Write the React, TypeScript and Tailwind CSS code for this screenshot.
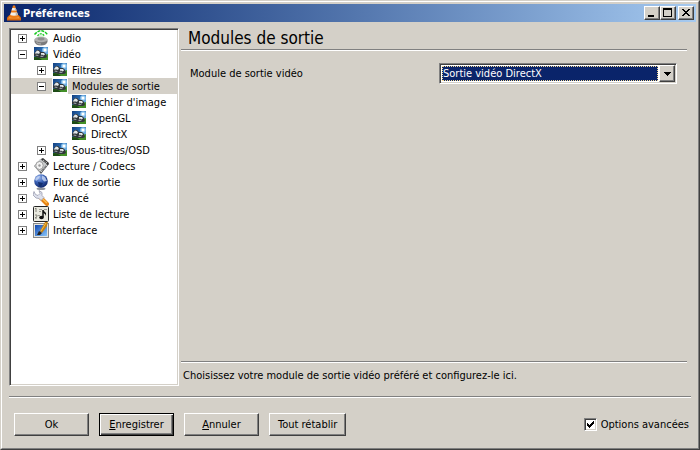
import { useState, type ReactNode } from "react";
import clsx from "clsx";

type IconName = "audio" | "video" | "codecs" | "stream" | "advanced" | "playlist" | "interface";

interface TreeItem {
  label: string;
  icon: IconName;
  level: 0 | 1 | 2;
  state?: "open" | "closed";
}

const items: TreeItem[] = [
  { label: "Audio", icon: "audio", level: 0, state: "closed" },
  { label: "Vidéo", icon: "video", level: 0, state: "open" },
  { label: "Filtres", icon: "video", level: 1, state: "closed" },
  { label: "Modules de sortie", icon: "video", level: 1, state: "open" },
  { label: "Fichier d'image", icon: "video", level: 2 },
  { label: "OpenGL", icon: "video", level: 2 },
  { label: "DirectX", icon: "video", level: 2 },
  { label: "Sous-titres/OSD", icon: "video", level: 1, state: "closed" },
  { label: "Lecture / Codecs", icon: "codecs", level: 0, state: "closed" },
  { label: "Flux de sortie", icon: "stream", level: 0, state: "closed" },
  { label: "Avancé", icon: "advanced", level: 0, state: "closed" },
  { label: "Liste de lecture", icon: "playlist", level: 0, state: "closed" },
  { label: "Interface", icon: "interface", level: 0, state: "closed" },
];

const indents = ["pl-[7px]", "pl-[26px]", "pl-[45px]"];

const raised =
  "border border-t-white border-l-white border-r-[#404040] border-b-[#404040] bg-[#d4d0c8] shadow-[inset_-1px_-1px_0_#808080]";
const sunken =
  "border border-t-[#808080] border-l-[#808080] border-r-white border-b-white bg-white shadow-[inset_1px_1px_0_#404040,inset_-1px_-1px_0_#d4d0c8]";

const drawings: Record<IconName, ReactNode> = {
  audio: (
    <>
      <path d="M4.500 5.500Q8 1 11.500 5.500L10 9H6z" fill="#d9f7d9" />
      <path d="M1.500 4.500Q8-3 14.500 4.500" fill="none" stroke="#14c81c" strokeWidth="1.400" strokeDasharray="3 1" />
      <path d="M4.500 6Q8 1.500 11.500 6" fill="none" stroke="#14c81c" strokeWidth="1.200" strokeDasharray="2 1" />
      <path d="M1.500 9.500v2.500c1 2.500 3 3.500 6.500 3.500s5.500-1 6.500-3.500V9.500z" fill="#7c7c7c" />
      <ellipse cx="8" cy="9.500" rx="6.500" ry="2.800" fill="#b0b0b0" />
      <ellipse cx="8" cy="9" rx="3.500" ry="1.400" fill="#8e8e8e" />
      <path d="M3.500 12.500Q5 14 8 14" fill="none" stroke="#b8b8b8" />
    </>
  ),
  video: (
    <>
      <defs>
        <linearGradient id="sky" x1="0" y1="0" x2="1" y2="0.5">
          <stop offset="0" stopColor="#123f80" />
          <stop offset="0.600" stopColor="#2f72b8" />
          <stop offset="1" stopColor="#6fb0e2" />
        </linearGradient>
      </defs>
      <path d="M1 1h14v13H1z" fill="url(#sky)" />
      <circle cx="12" cy="4" r="2.800" fill="#8fc6ef" />
      <circle cx="12" cy="4" r="1.500" fill="#fff" />
      <path d="M1 11l8-1 6-2v6H1z" fill="#438f28" />
      <path d="M1 11q5 0 8 3H1z" fill="#1d4b17" />
      <path d="M1 8l1-2 2-2h2l2 2h3l2 2 1 3-2 1H6l-5-2z" fill="#30363a" />
      <path d="M2 7l2-2.500L6 5l1 2-2 1-1-1-1 1zM8 7h3l1 1.500-1.500 1L9 8.500l-1 .5z" fill="#e2e7ea" />
      <path d="M2 9l2-.5L6 10H4zM7 10l2-.5 2 1.500H8z" fill="#9aa2a6" />
    </>
  ),
  codecs: (
    <>
      <path d="M1 8l7-7 8 5-8 10z" fill="#56585a" />
      <path d="M1 8l6-7 7 5-7 8z" fill="#c9cccd" />
      <path d="M8 1l2-1 6 5-1 2z" fill="#333" />
      <path d="M10 2l4 3" stroke="#e8e8e8" strokeDasharray="1 1" />
      <ellipse cx="6.500" cy="7.500" rx="3.700" ry="4" fill="#f1f1f1" stroke="#8c8c8c" strokeWidth="0.800" />
      <circle cx="6.500" cy="7.500" r="1.200" fill="#9a9a9a" />
      <path d="M8 14l6-7" stroke="#fff" strokeDasharray="1 1" />
    </>
  ),
  stream: (
    <>
      <defs>
        <radialGradient id="globe" cx="0.35" cy="0.25" r="0.75">
          <stop offset="0" stopColor="#9cb8ee" />
          <stop offset="0.500" stopColor="#3860b4" />
          <stop offset="1" stopColor="#122a70" />
        </radialGradient>
      </defs>
      <ellipse cx="8" cy="14.800" rx="4.500" ry="1.200" fill="#8e939c" />
      <circle cx="8" cy="7" r="6.800" fill="url(#globe)" />
      <path d="M2 5Q4 1.500 7 2L5.500 5 3 7zM9 1.500l3 1.500 2 4-3 .5-2-2.500z" fill="#c9d8f5" fillOpacity="0.800" />
      <path d="M5 8l5 1-2 4-2-1z" fill="#15306f" />
    </>
  ),
  advanced: (
    <>
      <path d="M8 8l6 6" stroke="#e58314" strokeWidth="4" strokeLinecap="round" />
      <path d="M8 7.500l6 5.500" stroke="#ffbf4d" strokeWidth="1.500" />
      <path d="M1 1.500L0 5l3 3 3 .5 2 2 3-3-2-2 0-3-3-2 1 3-2 2-2.500-1z" fill="#dde0ec" stroke="#9a9db0" strokeWidth="0.800" />
    </>
  ),
  playlist: (
    <>
      <rect x="0.500" y="0.500" width="15" height="15" rx="1" fill="#e9e9df" stroke="#242424" />
      <path d="M2 3l1-1v4M2 9h2v1.500L2 12h2" fill="none" stroke="#77776e" strokeWidth="0.900" />
      <path d="M6 3.500h3M6 5.500h2M5 9.500h2M11 3.500h3" stroke="#9b9b92" />
      <path d="M10 4v7" stroke="#111" strokeWidth="1.500" />
      <path d="M10 4l3 3v3l-1-2-2-1z" fill="#111" />
      <ellipse cx="8.500" cy="11.500" rx="2.300" ry="1.700" fill="#111" />
    </>
  ),
  interface: (
    <>
      <defs>
        <linearGradient id="screen" x1="0" y1="0" x2="1" y2="1">
          <stop offset="0" stopColor="#1048b0" />
          <stop offset="1" stopColor="#8ac6fa" />
        </linearGradient>
      </defs>
      <path d="M0 1h16v15H0z" fill="#888" />
      <path d="M1 2h14v13H1z" fill="#e4e4dd" />
      <path d="M2 3h12v11H2z" fill="url(#screen)" />
      <path d="M7 9l5-9 3-1-1 5-5 7z" fill="#c8820d" />
      <path d="M8 9l5-8" stroke="#f0bd50" strokeWidth="1" />
      <path d="M4 13l2-4 3 2-2 2z" fill="#222" />
    </>
  ),
};

function Cone() {
  return (
    <svg viewBox="0 0 16 16" className="h-4 w-4" aria-hidden="true">
      <path d="M1 15.500v-3L3.500 10h9l2.500 2.500v3z" fill="#d9690f" />
      <path d="M2 13.500L4 11h8l2 2.500z" fill="#f69a3a" />
      <path d="M7 .5h2L12.500 12q-4.500 2-9 0z" fill="#ee7c18" />
      <path d="M6.300 3h3.400l.8 2.500h-5zM5 7.500h6.100l.8 2.500q-4 1.500-7.700 0z" fill="#f1efec" />
      <path d="M8.500 3h1.200l.8 2.500H9zM9.500 7.500h1.600l.8 2.500-2 .5z" fill="#b9b6b3" />
    </svg>
  );
}

function TitleButton({ label, className, children }: { label: string; className?: string; children: ReactNode }) {
  return (
    <button type="button" aria-label={label} className={clsx("flex h-[14px] w-4 items-center justify-center", raised, className)}>
      <svg viewBox="0 0 12 10" className="h-[10px] w-3 shrink-0" shapeRendering="crispEdges" aria-hidden="true">
        {children}
      </svg>
    </button>
  );
}

function TreeRow({ item, selected, onSelect }: { item: TreeItem; selected: boolean; onSelect: () => void }) {
  return (
    <li
      role="treeitem"
      aria-selected={selected}
      aria-expanded={item.state ? item.state === "open" : undefined}
      onClick={onSelect}
      className={clsx("flex h-4", indents[item.level], selected && "bg-[#d4d0c8]")}
    >
      <span className="mt-1 mr-[6px] flex h-[9px] w-[9px] shrink-0">
        {item.state && (
          <svg viewBox="0 0 9 9" className="h-[9px] w-[9px]" shapeRendering="crispEdges" aria-hidden="true">
            <path d="M0 0h9v9H0z" fill="#808080" />
            <path d="M1 1h7v7H1z" fill="#fff" />
            <path d={item.state === "open" ? "M2 4h5v1H2z" : "M2 4h5v1H2zM4 2h1v5H4z"} fill="#000" />
          </svg>
        )}
      </span>
      <svg viewBox="0 0 16 16" className="mr-1 h-4 w-4 shrink-0 bg-white" aria-hidden="true">
        {drawings[item.icon]}
      </svg>
      <span className="leading-[18px] whitespace-nowrap">{item.label}</span>
    </li>
  );
}

function DialogButton({ isDefault, children }: { isDefault?: boolean; children: ReactNode }) {
  return (
    <button
      type="button"
      className={clsx(
        "h-[23px] min-w-[75px] px-2 whitespace-nowrap",
        isDefault
          ? "border border-black bg-[#d4d0c8] shadow-[inset_1px_1px_0_#fff,inset_-1px_-1px_0_#404040,inset_-2px_-2px_0_#808080]"
          : raised
      )}
    >
      {children}
    </button>
  );
}

export default function App() {
  const [selected, setSelected] = useState("Modules de sortie");
  const [advanced, setAdvanced] = useState(true);

  return (
    <div className="flex min-h-screen border border-t-[#d4d0c8] border-r-[#404040] border-b-[#404040] border-l-[#d4d0c8] bg-[#d4d0c8] font-['DejaVu_Sans_Condensed','DejaVu_Sans',sans-serif] text-[11px] leading-4 text-black">
      <div className="flex flex-1 flex-col border border-t-white border-r-[#808080] border-b-[#808080] border-l-white p-[2px]">
        <header className="flex h-[18px] items-center bg-linear-to-r from-[#0a246a] to-[#a6caf0] px-[2px] text-white">
          <Cone />
          <h1 className="ml-px flex-1 self-start leading-5 font-bold">Préférences</h1>
          <TitleButton label="Réduire">
            <path d="M2 7h6v2H2z" />
          </TitleButton>
          <TitleButton label="Agrandir">
            <path d="M1 0h9v9H1zM2 2v6h7V2z" fillRule="evenodd" />
          </TitleButton>
          <TitleButton label="Fermer" className="ml-[2px]">
            <path d="M2 1h2v1h1v1h2V2h1V1h2v1H9v1H8v1H7v1h1v1h1v1h1v1H8V7H7V6H5v1H4v1H2V7h1V6h1V5h1V4H4V3H3V2H2z" />
          </TitleButton>
        </header>

        <main className="flex flex-1 gap-[2px] px-[5px] pt-[6px]">
          <div className={clsx("w-[170px] shrink-0 p-px", sunken)}>
            <ul role="tree" aria-label="Catégories">
              {items.map((item) => (
                <TreeRow key={item.label} item={item} selected={selected === item.label} onSelect={() => setSelected(item.label)} />
              ))}
            </ul>
          </div>

          <section className="mr-1 flex flex-1 flex-col">
            <div className="border-b border-white">
              <h2 className="border-b border-[#808080] pl-[7px] text-[17px] leading-[21px]">Modules de sortie</h2>
            </div>
            <div className="mt-3 flex items-center pr-[10px] pl-[9px]">
              <label htmlFor="vout" className="flex-1">
                Module de sortie vidéo
              </label>
              <div className={clsx("flex h-[21px] w-[238px] p-px", sunken)}>
                <select
                  id="vout"
                  className="m-px h-[15px] min-w-0 flex-1 appearance-none border border-dotted border-[#f5db95] bg-[#0a246a] leading-[13px] text-white outline-none"
                >
                  <option>Sortie vidéo DirectX</option>
                </select>
                <span className={clsx("pointer-events-none flex w-4 items-center justify-center", raised)}>
                  <svg viewBox="0 0 7 4" className="h-1 w-[7px]" shapeRendering="crispEdges" aria-hidden="true">
                    <path d="M0 0h7v1H6v1H5v1H4v1H3V3H2V2H1V1H0z" />
                  </svg>
                </span>
              </div>
            </div>
            <div className="mt-auto border-t border-[#808080]">
              <p className="border-t border-white pt-[5px] pb-[2px] pl-[2px]">
                Choisissez votre module de sortie vidéo préféré et configurez-le ici.
              </p>
            </div>
          </section>
        </main>

        <footer className="mx-[5px] mt-[10px] border-t border-[#808080]">
          <div className="flex items-center gap-[10px] border-t border-white pt-[15px] pr-[2px] pb-[10px] pl-[5px]">
            <DialogButton>Ok</DialogButton>
            <DialogButton isDefault>
              <u>E</u>nregistrer
            </DialogButton>
            <DialogButton>
              <u>A</u>nnuler
            </DialogButton>
            <DialogButton>Tout rétablir</DialogButton>
            <label className="ml-auto flex items-center gap-1">
              <span className="grid h-[13px] w-[13px]">
                <input
                  type="checkbox"
                  checked={advanced}
                  onChange={(e) => setAdvanced(e.target.checked)}
                  className={clsx("col-start-1 row-start-1 h-[13px] w-[13px] appearance-none", sunken)}
                />
                {advanced && (
                  <svg
                    viewBox="0 0 13 13"
                    className="pointer-events-none col-start-1 row-start-1 h-[13px] w-[13px]"
                    shapeRendering="crispEdges"
                    aria-hidden="true"
                  >
                    <path d="M3 5h1v1h1v1h1V6h1V5h1V4h1V3h1v3H9v1H8v1H7v1H6v1H5V9H4V8H3z" />
                  </svg>
                )}
              </span>
              Options avancées
            </label>
          </div>
        </footer>
      </div>
    </div>
  );
}
